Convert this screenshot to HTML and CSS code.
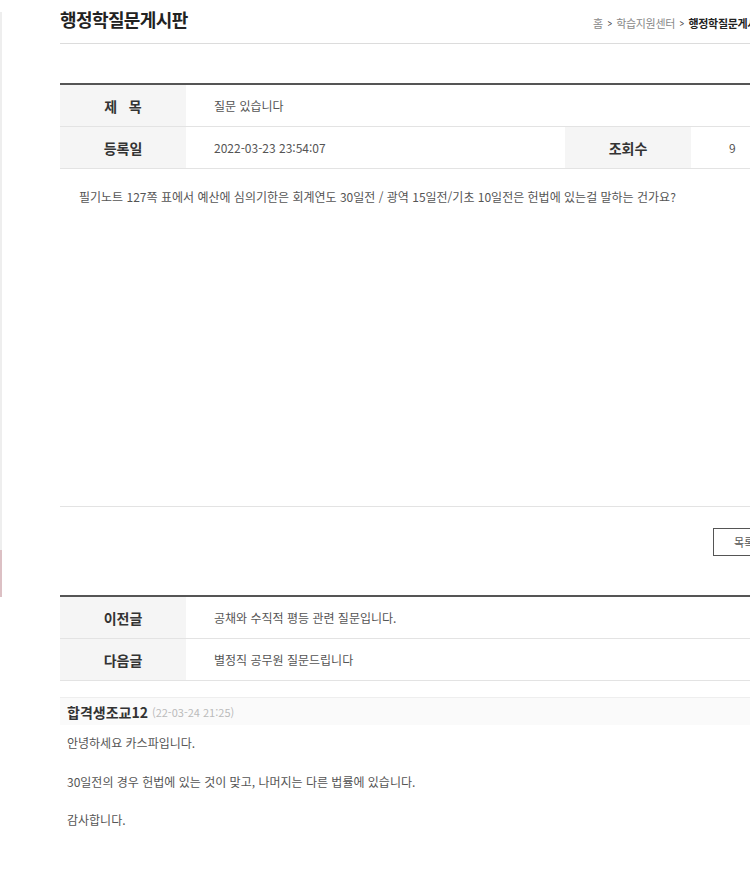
FILE: index.html
```html
<!DOCTYPE html>
<html lang="ko">
<head>
<meta charset="utf-8">
<link rel="stylesheet" href="styles.css">
</head>
<body>
<div class="page">
  <div class="sidebar">
    <div class="side-gray"></div>
    <div class="side-pink"></div>
  </div>
  <main class="main">
    <header class="head">
      <h1 class="title">행정학질문게시판</h1>
      <div class="crumb">홈 <span class="arr">&gt;</span> 학습지원센터 <span class="arr">&gt;</span> <b>행정학질문게시판</b></div>
    </header>

    <div class="info">
      <div class="row">
        <div class="lab">제&nbsp;&nbsp;&nbsp;목</div>
        <div class="val grow">질문 있습니다</div>
      </div>
      <div class="row">
        <div class="lab">등록일</div>
        <div class="val grow">2022-03-23 23:54:07</div>
        <div class="lab">조회수</div>
        <div class="val hits">9</div>
      </div>
    </div>

    <div class="content">필기노트 127쪽 표에서 예산에 심의기한은 회계연도 30일전 / 광역 15일전/기초 10일전은 헌법에 있는걸 말하는 건가요?</div>

    <div class="btns"><a class="btn">목록</a></div>

    <div class="info">
      <div class="row">
        <div class="lab">이전글</div>
        <div class="val grow">공채와 수직적 평등 관련 질문입니다.</div>
      </div>
      <div class="row">
        <div class="lab">다음글</div>
        <div class="val grow">별정직 공무원 질문드립니다</div>
      </div>
    </div>

    <section class="comment">
      <div class="c-head"><b>합격생조교12</b> <span class="c-date">(22-03-24 21:25)</span></div>
      <div class="c-body">안녕하세요 카스파입니다.<br><br>30일전의 경우 헌법에 있는 것이 맞고, 나머지는 다른 법률에 있습니다.<br><br>감사합니다.</div>
    </section>
  </main>
</div>
</body>
</html>
```

FILE: styles.css
```css
html, body {
  margin: 0;
  padding: 0;
  background: #fff;
}
body {
  width: 750px;
  height: 875px;
  overflow: hidden;
  font-family: "Noto Sans CJK KR", "Noto Sans", sans-serif;
  color: #555;
}
.page {
  display: flex;
  width: 900px;
}
.sidebar {
  width: 2px;
  padding-top: 12px;
  display: flex;
  flex-direction: column;
}
.side-gray {
  height: 538px;
  background: #eeeeee;
}
.side-pink {
  height: 47px;
  background: #dcc0c4;
}
.main {
  margin-left: 58px;
  width: 721px;
}
.head {
  height: 43px;
  border-bottom: 1px solid #dcdcdc;
  display: flex;
  justify-content: space-between;
  align-items: flex-start;
}
.title {
  margin: 5px 0 0;
  font-size: 18px;
  font-weight: 700;
  color: #222;
  letter-spacing: -0.6px;
  line-height: 28px;
}
.crumb {
  margin: 14px 14px 0 0;
  font-size: 11px;
  color: #888;
  line-height: 18px;
  letter-spacing: -0.3px;
  white-space: nowrap;
}
.crumb b {
  color: #222;
  font-weight: 700;
}
.arr {
  color: #444;
  display: inline-block;
  margin: 0 1px;
  transform: scaleX(0.7);
}
.info {
  margin-top: 39px;
  border-top: 2px solid #555;
}
.btns + .info {
  margin-top: 0;
}
.row {
  display: flex;
  height: 41px;
  border-bottom: 1px solid #e3e3e3;
}
.lab {
  width: 126px;
  flex: none;
  background: #f5f5f5;
  display: flex;
  align-items: center;
  justify-content: center;
  font-size: 14px;
  font-weight: 700;
  color: #333;
}
.val {
  display: flex;
  align-items: center;
  padding-left: 28px;
  font-size: 12px;
  color: #555;
}
.grow {
  flex: 1;
}
.hits {
  width: 52px;
  padding-left: 38px;
}
.content {
  height: 318px;
  padding: 19px 0 0 19px;
  font-size: 12px;
  line-height: 18px;
  color: #555;
  border-bottom: 1px solid #e3e3e3;
}
.btns {
  display: flex;
  justify-content: flex-end;
  padding: 21px 6px 39px 0;
}
.btn {
  width: 60px;
  height: 26px;
  border: 1px solid #555;
  display: flex;
  align-items: center;
  justify-content: center;
  font-size: 11px;
  color: #555;
}
.comment {
  margin-top: 16px;
}
.c-head {
  height: 27px;
  border-top: 1px solid #eeeeee;
  background: #fafafa;
  display: flex;
  align-items: center;
  padding-left: 7px;
  gap: 4px;
  font-size: 14px;
}
.c-head b {
  color: #333;
  font-weight: 700;
}
.c-date {
  font-size: 11px;
  color: #bbb;
}
.c-body {
  padding: 8px 0 0 7px;
  font-size: 12px;
  line-height: 19.3px;
  color: #555;
}
```
